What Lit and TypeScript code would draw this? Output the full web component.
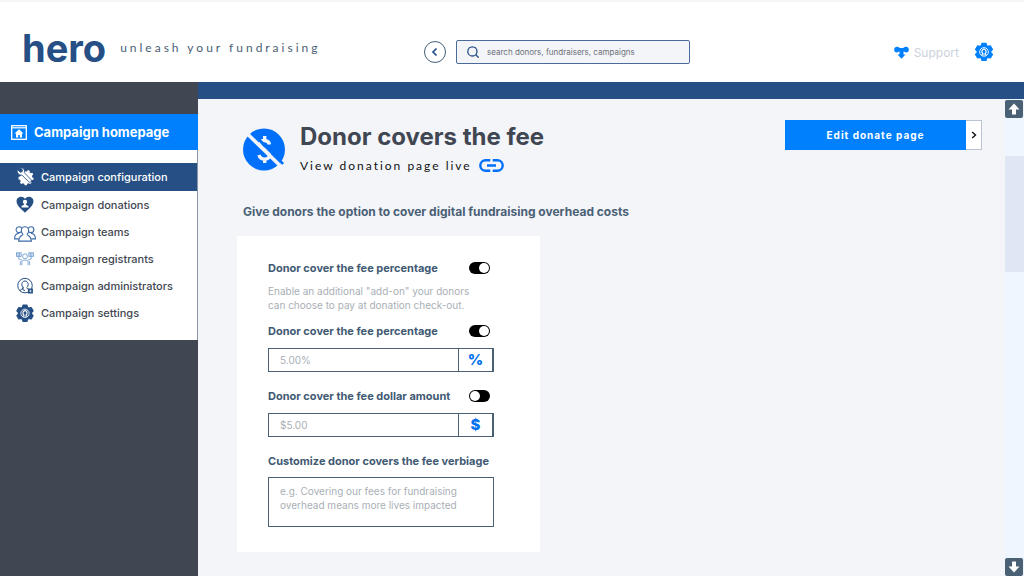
import { LitElement, html, css, svg } from "lit";
import { customElement, state } from "lit/decorators.js";

const gearPath =
  "M9.6 1h4.8l.8 2.7 1.9 1.1 2.8-.7 2.4 4.1-2 2v2.2l2 2.1-2.4 4.1-2.8-.7-1.9 1.1-.8 2.8H9.6l-.8-2.8-1.9-1.1-2.8.7-2.4-4.1 2-2.100v-2.200l-2-2 2.400-4.100 2.800.7 1.900-1.100z";

const gearIcon = svg`
  <path d=${gearPath} fill="currentColor" stroke="currentColor" stroke-width="2" stroke-linejoin="round"/>
  <circle cx="12" cy="11.400" r="5.400" fill="none" stroke="#fff" stroke-width="1.100"/>
  <path d="M9 15.200h1.600v-1.700a2.600 3 0 1 1 2.800 0v1.700H15" fill="none" stroke="#fff" stroke-width="1.500"/>`;

const icons: Record<string, unknown> = {
  tools: svg`
    <path d="M12.500 5.200l1.900.1 1-1.800 2.300.9-.2 2 1.300 1.100 2-.6 1.100 2.200-1.500 1.400.2 1.700 1.800.9-.5 2.400-2 .2-.9 1.500.9 1.800-1.900 1.500-1.700-1.100-1.600.6-.6 2h-2.400l-.7-1.900-1.600-.6-1.800 1-1.700-1.700 1-1.800-.8-1.600-1.900-.4V12l2-.8z" fill="currentColor"/>
    <path d="M3 3l3.200 3.200 2.300-.5.500-2.300L6.200.9c2.500-.6 5.400 1.200 5.300 4.600l-.3 1.300 8 8.400c1.500 2-1 4.200-2.700 2.600L8.300 9.700C5 10.600 1.800 7 3 3z" fill="currentColor" stroke="#254f85" stroke-width="1"/>`,
  heart: svg`
    <path d="M12 23C7 18.500 1 13.500 1 8.200 1 2 9 .2 12 5c3-4.800 11-3 11 3.200C23 13.500 17 18.500 12 23z" fill="currentColor"/>
    <circle cx="12" cy="9" r="2.800" fill="#fff"/>
    <path d="M10.800 11h2.400v1.600l3.300 1.600v2h-9v-2l3.300-1.600z" fill="#fff"/>`,
  team: svg`
    <g fill="none" stroke="#3d6ca8" stroke-width="1.200">
      <circle cx="5.500" cy="6.500" r="3.200"/><circle cx="18.500" cy="6.500" r="3.200"/>
      <path d="M5 16.500H.6c0-4 1.400-5.800 4.900-6.200M19 16.500h4.400c0-4-1.400-5.800-4.900-6.200"/>
      <path d="M9.800 11.200C8.500 10.500 8 9 8 7.500a4 4.300 0 0 1 8 0c0 1.500-.5 3-1.800 3.700M9.800 11.200c-.2 2.300-4.300.8-4.800 7.800h14c-.5-7-4.600-5.500-4.800-7.800" fill="#fff"/>
    </g>`,
  registrants: svg`
    <g fill="none" stroke="#6d9ad0" stroke-width="1.100">
      <rect x="1" y="4" width="6" height="4.500"/><rect x="17" y="4" width="6" height="4.500"/>
      <path d="M3 4v4.500M5 4v4.500M19 4v4.500M21 4v4.500M4 8.500v3.500l4 1.500M20 8.500v3.500l-4 1.500M8 20v-5c0-2 8-2 8 0v5M6 20v-5M18 20v-5"/>
      <circle cx="12" cy="8.500" r="3.200"/>
    </g>`,
  admin: svg`
    <g fill="none" stroke="#254f85" stroke-width="1.200">
      <circle cx="12" cy="11.500" r="8.700"/>
      <path d="M6 18c.3-2.500 3.700-2 4-4-3-2-2.200-8 2-8s5 6 2 8c.1 1 1 1.300 2 1.600M9.500 13v3.500l2.500 1"/>
    </g>
    <rect x="15.500" y="15" width="6" height="6" fill="#254f85"/><path d="M17 18h3M18.500 16.500v3" stroke="#fff" stroke-width=".8"/>`,
  gear: gearIcon,
};

const navItems = [
  { icon: "tools", label: "Campaign configuration", box: "0 0 24 24" },
  { icon: "heart", label: "Campaign donations", box: "-1 0 26 26" },
  { icon: "team", label: "Campaign teams", box: "0 -1 24 20" },
  { icon: "registrants", label: "Campaign registrants", box: "-1 -1 26 26" },
  { icon: "admin", label: "Campaign administrators", box: "0 0 24 24" },
  { icon: "gear", label: "Campaign settings", box: "-1 -2 26 26" },
];

@customElement("app-root")
export class AppRoot extends LitElement {
  @state() private active = 0;

  static styles = css`
    :host {
      display: flex;
      flex-direction: column;
      min-height: 100vh;
      background: #f3f5f9;
      font-family: Inter, sans-serif;
      color: #414752;
    }
    * { box-sizing: border-box; }
    a { color: inherit; text-decoration: none; }
    svg { display: block; flex: none; }
    button { font-family: inherit; padding: 0; cursor: pointer; }
    h1, h2, p { margin: 0; }

    .header {
      display: grid;
      grid-template-columns: 424px minmax(0, 266px) 1fr;
      align-items: center;
      height: 82px;
      padding-top: 20px;
      border-top: 2px solid #f5f5f5;
      background: #fff;
    }
    .brand { display: flex; align-items: center; gap: 14px; padding: 0 0 8px 22px; }
    .logo { font-size: 38px; line-height: 40px; font-weight: 700; color: #254f85; }
    .tagline {
      font-family: Lato, sans-serif;
      font-size: 12px;
      line-height: 16px;
      letter-spacing: 3px;
      color: #4a6075;
      white-space: nowrap;
    }
    .search { display: flex; align-items: center; gap: 10px; }
    .back {
      display: grid;
      place-items: center;
      flex: none;
      width: 22px;
      height: 22px;
      border: 1px solid #456078;
      border-radius: 50%;
      background: #fff;
      color: #254f85;
    }
    .search-box {
      display: flex;
      align-items: center;
      flex: 1;
      gap: 8px;
      height: 24px;
      padding: 0 10px;
      border: 1px solid #4a6b9b;
      border-radius: 2px;
      background: #f3f5f9;
      color: #254f85;
    }
    .search-box input {
      flex: 1;
      min-width: 0;
      padding: 0;
      border: 0;
      outline: 0;
      background: none;
      font: 8px/16px Inter, sans-serif;
    }
    .search-box input::placeholder { color: #6d7178; opacity: 1; }
    .actions { display: flex; align-items: center; justify-content: flex-end; gap: 15px; padding-right: 30px; }
    .support { display: flex; align-items: center; gap: 5px; font-size: 12px; color: #cbd2dc; }
    .support svg, .settings { color: #0080fd; }
    .settings { border: 0; background: none; }

    .body { display: grid; grid-template-columns: 198px minmax(0, 1fr); flex: 1; }
    .sidebar { padding-top: 32px; background: #414752; }
    .home {
      display: flex;
      align-items: center;
      gap: 7px;
      height: 36px;
      padding-left: 11px;
      background: #0080fd;
      color: #fff;
      font-size: 13px;
      font-weight: 700;
    }
    .nav { padding: 13px 0 14px; background: #fff; border-right: 1px solid #8b95a5; }
    .nav-item {
      display: flex;
      align-items: center;
      gap: 5px;
      height: 27px;
      padding-left: 14px;
      font-size: 11px;
      font-weight: 500;
      color: #414752;
    }
    .nav-item svg { color: #254f85; }
    .nav-item.active { height: 28px; background: #254f85; color: #fff; }
    .nav-item.active svg { color: #fff; }

    .main { display: flex; flex-direction: column; min-width: 0; }
    .band { height: 17px; background: #254f85; }
    .stage { display: flex; flex: 1; }
    .content { flex: 1; min-width: 0; padding: 21px 23px 24px 39px; }
    .top { display: flex; justify-content: space-between; align-items: flex-start; }
    .title { display: flex; gap: 15px; padding: 2px 0 0 6px; }
    .title-icon { padding-top: 6px; }
    h1 { font-size: 24px; line-height: 30px; font-weight: 700; white-space: nowrap; }
    .live {
      display: flex;
      align-items: center;
      gap: 7px;
      height: 26px;
      font-family: Lato, sans-serif;
      font-size: 12px;
      letter-spacing: 2px;
      color: #111;
    }
    .edit { display: flex; height: 30px; }
    .edit-main {
      width: 181px;
      border: 0;
      background: #0080fd;
      color: #fff;
      font-size: 10px;
      font-weight: 700;
      letter-spacing: 1px;
    }
    .edit-more {
      display: grid;
      place-items: center;
      width: 16px;
      border: 1px solid #b8c4d3;
      border-left: 0;
      background: #fff;
      color: #111;
    }
    h2 { padding: 24px 0 14px 6px; font-size: 12px; line-height: 20px; font-weight: 700; color: #4a6075; }

    .card { display: flex; flex-direction: column; width: 303px; padding: 22px 46px 25px 31px; background: #fff; }
    .row { display: flex; justify-content: space-between; align-items: center; height: 20px; padding-right: 4px; }
    .label { font-size: 11px; line-height: 20px; font-weight: 700; color: #415a73; white-space: nowrap; }
    .help { padding: 6px 0 9px; font-size: 10px; line-height: 14px; color: #a9afb6; white-space: nowrap; }
    .toggle {
      appearance: none;
      display: flex;
      align-items: center;
      flex: none;
      width: 21px;
      height: 12px;
      margin: 0;
      padding: 1px;
      border-radius: 6px;
      background: #000;
      cursor: pointer;
    }
    .toggle::before { content: ""; width: 10px; height: 10px; border-radius: 50%; background: #fff; }
    .toggle:checked { justify-content: flex-end; }
    .field { display: flex; height: 24px; margin: 7px 0 14px; border: 1px solid #4a6075; border-right-width: 2px; }
    .field input {
      flex: 1;
      min-width: 0;
      padding: 0 11px;
      border: 0;
      outline: 0;
      background: none;
      font: 10px/20px Inter, sans-serif;
    }
    .unit {
      display: grid;
      place-items: center;
      width: 34px;
      border-left: 1px solid #4a6075;
      font-size: 15px;
      line-height: 20px;
      font-weight: 800;
      color: #0070ee;
    }
    .verbiage {
      height: 50px;
      margin-top: 6px;
      padding: 6px 11px;
      border: 1px solid #4a6075;
      border-radius: 0;
      outline: 0;
      resize: none;
      font: 10px/14px Inter, sans-serif;
    }
    .field input::placeholder, .verbiage::placeholder { color: #a9afb6; opacity: 1; }

    .rail {
      display: flex;
      flex-direction: column;
      justify-content: space-between;
      width: 19px;
      padding-top: 1px;
      background: #eff6ff;
    }
    .rail-btn {
      display: grid;
      place-items: center;
      width: 18px;
      height: 18px;
      border: 0;
      border-radius: 2px;
      background: #4a6075;
      color: #fff;
    }
    .track { flex: 1; padding-top: 38px; }
    .thumb { height: 116px; background: #dfe6f4; }
  `;

  private toggleRow(id: string, text: string, on: boolean) {
    return html`<div class="row">
      <label class="label" for=${id}>${text}</label>
      <input class="toggle" id=${id} type="checkbox" role="switch" ?checked=${on} />
    </div>`;
  }

  private field(label: string, placeholder: string, unit: string) {
    return html`<div class="field">
      <input type="text" aria-label=${label} placeholder=${placeholder} />
      <span class="unit">${unit}</span>
    </div>`;
  }

  render() {
    return html`
      <header class="header">
        <div class="brand">
          <a class="logo" href="#">hero</a>
          <span class="tagline">unleash your fundraising</span>
        </div>
        <div class="search">
          <button class="back" aria-label="Back">
            <svg width="10" height="10" viewBox="0 0 10 10"><path d="M6.500 1.500L3 5l3.500 3.500" fill="none" stroke="currentColor" stroke-width="1.700"/></svg>
          </button>
          <label class="search-box">
            <svg width="12" height="12" viewBox="0 0 12 12"><g fill="none" stroke="currentColor" stroke-width="1.300"><circle cx="5.400" cy="5.400" r="4.600"/><path d="M8.700 8.700L11.700 11.700"/></g></svg>
            <input type="search" aria-label="Search" placeholder="search donors, fundraisers, campaigns" />
          </label>
        </div>
        <div class="actions">
          <a class="support" href="#">
            <svg width="15" height="13" viewBox="0 0 15 13"><path d="M.2 4.500C-.3 1.500 2 0 4.200.9L6 2h3L10.800.9C13 0 15.300 1.500 14.800 4.500 14.300 6.500 12 7 10.500 5.800L9.500 5.500v3h2L7.500 12.700 3.500 8.500h2v-3l-1 .3C3 7 .7 6.500.2 4.500z" fill="currentColor"/></svg>
            Support
          </a>
          <button class="settings" aria-label="Settings">
            <svg width="20" height="20" viewBox="0 -1 24 25">${gearIcon}</svg>
          </button>
        </div>
      </header>
      <div class="body">
        <aside class="sidebar">
          <a class="home" href="#">
            <svg width="16" height="15" viewBox="0 0 16 15"><rect x=".7" y=".7" width="14.600" height="13.600" fill="none" stroke="#fff" stroke-width="1.300"/><path d="M1 2.800h14" stroke="#fff" stroke-width="1.200"/><path d="M8 4.200L3.500 8.500H5v4h2.200V10h1.600v2.500H11v-4h1.500z" fill="#fff"/></svg>
            Campaign homepage
          </a>
          <nav class="nav">
            ${navItems.map(
              (item, i) => html`<a class="nav-item ${i === this.active ? "active" : ""}" href="#" @click=${() => (this.active = i)}>
                <svg width="22" height="20" viewBox=${item.box}>${icons[item.icon]}</svg>
                ${item.label}
              </a>`
            )}
          </nav>
        </aside>
        <main class="main">
          <div class="band"></div>
          <div class="stage">
            <div class="content">
              <div class="top">
                <div class="title">
                  <div class="title-icon">
                    <svg width="42" height="43" viewBox="0 0 42 43"><circle cx="21" cy="21.500" r="21" fill="#0070fb"/><path d="M26.500 16.500c-1-5-9.500-5.500-9.500-.3 0 5 9.500 5 9.500 11 0 5.300-9 5.300-10.500-.2M21.700 8v5M21.700 30v5" fill="none" stroke="#f3f5f9" stroke-width="3.400"/><path d="M9 4.500L40 36" stroke="#0070fb" stroke-width="3"/><path d="M3.500 5L38.500 39" stroke="#f3f5f9" stroke-width="3.600"/></svg>
                  </div>
                  <div>
                    <h1>Donor covers the fee</h1>
                    <a class="live" href="#">
                      View donation page live
                      <svg width="25" height="13" viewBox="0 0 25 13"><g fill="none" stroke="#0070fb" stroke-width="2.400"><path d="M11.300 1.300H6.500a5.200 5.200 0 0 0 0 10.400h4.800M13.700 1.300h4.800a5.200 5.200 0 0 1 0 10.400h-4.800M8 6.500h9"/></g></svg>
                    </a>
                  </div>
                </div>
                <div class="edit">
                  <button class="edit-main">Edit donate page</button>
                  <button class="edit-more" aria-label="More options">
                    <svg width="6" height="8" viewBox="0 0 6 8"><path d="M1.200 1L4.500 4 1.200 7" fill="none" stroke="currentColor" stroke-width="1.400"/></svg>
                  </button>
                </div>
              </div>
              <h2>Give donors the option to cover digital fundraising overhead costs</h2>
              <form class="card">
                ${this.toggleRow("fee", "Donor cover the fee percentage", true)}
                <p class="help">Enable an additional "add-on" your donors<br />can choose to pay at donation check-out.</p>
                ${this.toggleRow("percent", "Donor cover the fee percentage", true)}
                ${this.field("Fee percentage", "5.00%", "%")}
                ${this.toggleRow("dollar", "Donor cover the fee dollar amount", false)}
                ${this.field("Fee dollar amount", "$5.00", "$")}
                <label class="label" for="verbiage">Customize donor covers the fee verbiage</label>
                <textarea class="verbiage" id="verbiage" placeholder="e.g. Covering our fees for fundraising overhead means more lives impacted"></textarea>
              </form>
            </div>
            <div class="rail">
              <button class="rail-btn" aria-label="Scroll up">
                <svg width="12" height="12" viewBox="0 0 12 12"><path d="M6 .5l5.500 6H8V11.500H4V6.500H.5z" fill="currentColor"/></svg>
              </button>
              <div class="track"><div class="thumb"></div></div>
              <button class="rail-btn" aria-label="Scroll down">
                <svg width="12" height="12" viewBox="0 0 12 12"><path d="M6 11.500l5.500-6H8V.5H4v5H.5z" fill="currentColor"/></svg>
              </button>
            </div>
          </div>
        </main>
      </div>
    `;
  }
}
